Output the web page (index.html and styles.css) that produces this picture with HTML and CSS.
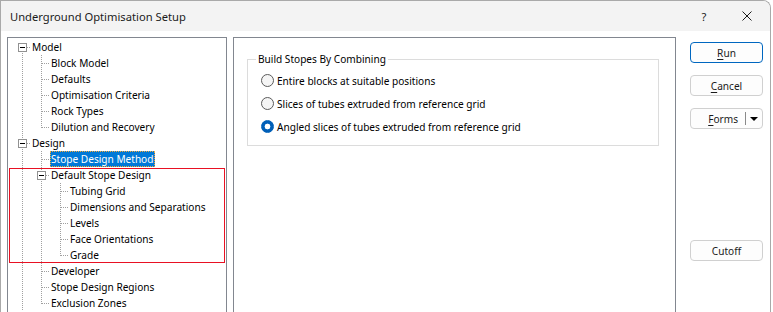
FILE: index.html
```html
<!DOCTYPE html>
<html lang="en">
<head>
    <meta charset="UTF-8">
    <title>Underground Optimisation Setup</title>
    <link rel="stylesheet" href="styles.css">
</head>
<body>
    <div class="window">
        <div class="titlebar">
            <span class="title">Underground Optimisation Setup</span>
            <span class="cap help">?</span>
            <span class="cap close">
                <svg width="10" height="10" viewBox="0 0 10 10"><path d="M0.5 0.5L9.5 9.5M9.5 0.5L0.5 9.5" stroke="#1b1b1b" stroke-width="1" fill="none"/></svg>
            </span>
        </div>
        <div class="body">
            <div class="tree">
                <div class="row"><span class="g first"><span class="box"></span></span><span class="lbl">Model</span></div>
                <div class="row"><span class="g pipe"></span><span class="g tee"></span><span class="lbl">Block Model</span></div>
                <div class="row"><span class="g pipe"></span><span class="g tee"></span><span class="lbl">Defaults</span></div>
                <div class="row"><span class="g pipe"></span><span class="g tee"></span><span class="lbl">Optimisation Criteria</span></div>
                <div class="row"><span class="g pipe"></span><span class="g tee"></span><span class="lbl">Rock Types</span></div>
                <div class="row"><span class="g pipe"></span><span class="g elbow"></span><span class="lbl">Dilution and Recovery</span></div>
                <div class="row"><span class="g tee"><span class="box"></span></span><span class="lbl">Design</span></div>
                <div class="row"><span class="g pipe"></span><span class="g tee"></span><span class="lbl selected">Stope Design Method</span></div>
                <div class="row"><span class="g pipe"></span><span class="g tee"><span class="box"></span></span><span class="lbl">Default Stope Design</span></div>
                <div class="row"><span class="g pipe"></span><span class="g pipe"></span><span class="g tee"></span><span class="lbl">Tubing Grid</span></div>
                <div class="row"><span class="g pipe"></span><span class="g pipe"></span><span class="g tee"></span><span class="lbl">Dimensions and Separations</span></div>
                <div class="row"><span class="g pipe"></span><span class="g pipe"></span><span class="g tee"></span><span class="lbl">Levels</span></div>
                <div class="row"><span class="g pipe"></span><span class="g pipe"></span><span class="g tee"></span><span class="lbl">Face Orientations</span></div>
                <div class="row"><span class="g pipe"></span><span class="g pipe"></span><span class="g elbow"></span><span class="lbl">Grade</span></div>
                <div class="row"><span class="g pipe"></span><span class="g tee"></span><span class="lbl">Developer</span></div>
                <div class="row"><span class="g pipe"></span><span class="g tee"></span><span class="lbl">Stope Design Regions</span></div>
                <div class="row"><span class="g pipe"></span><span class="g elbow"></span><span class="lbl">Exclusion Zones</span></div>
            </div>
            <div class="page">
                <fieldset class="group">
                    <legend>Build Stopes By Combining</legend>
                    <div class="radio"><span class="dot"></span>Entire blocks at suitable positions</div>
                    <div class="radio"><span class="dot"></span>Slices of tubes extruded from reference grid</div>
                    <div class="radio"><span class="dot on"></span>Angled slices of tubes extruded from reference grid</div>
                </fieldset>
            </div>
            <div class="buttons">
                <button class="btn default"><u>R</u>un</button>
                <button class="btn"><u>C</u>ancel</button>
                <button class="btn split"><span class="split-label"><u>F</u>orms</span><span class="split-sep"></span><span class="split-arrow"></span></button>
                <button class="btn cutoff">Cutoff</button>
            </div>
        </div>
        <div class="annotation"></div>
    </div>
</body>
</html>
```

FILE: styles.css
```css
html, body {
    margin: 0;
    padding: 0;
    background: #ffffff;
}
body {
    font-family: "Segoe UI", "Noto Sans", sans-serif;
    font-size: 10.1px;
    color: #000;
}
.window {
    position: relative;
    width: 771px;
    height: 312px;
    box-sizing: border-box;
    border: 1px solid #a9a9a9;
    border-bottom: none;
    border-top-right-radius: 8px;
    overflow: hidden;
    background: #ffffff;
}
.titlebar {
    height: 30px;
    display: flex;
    align-items: center;
    background: #f3f3f3;
    font-size: 11.2px;
}
.title {
    padding-left: 9px;
    color: #1b1b1b;
}
.cap {
    height: 30px;
    display: flex;
    align-items: center;
    justify-content: center;
    color: #1b1b1b;
}
.help {
    margin-left: auto;
    width: 40px;
}
.close {
    width: 46px;
}
.body {
    display: flex;
    align-items: flex-start;
    padding: 6px 0 0 6px;
}

/* tree */
.tree {
    --v: repeating-linear-gradient(to bottom, #a0a0a0 0 1px, transparent 1px 2px);
    --h: repeating-linear-gradient(to right, #a0a0a0 0 1px, transparent 1px 2px);
    flex: none;
    width: 220px;
    height: 300px;
    box-sizing: border-box;
    border: 1px solid #828790;
    padding-top: 1px;
    background: #fff;
}
.row {
    display: flex;
    height: 16px;
    padding-left: 5px;
}
.g {
    flex: none;
    width: 19px;
    height: 16px;
    display: flex;
    align-items: flex-start;
}
.pipe {
    background: var(--v) 9px 0 / 1px 16px no-repeat;
}
.tee {
    background: var(--v) 9px 0 / 1px 16px no-repeat, var(--h) 10px 8px / 7px 1px no-repeat;
}
.elbow {
    background: var(--v) 9px 0 / 1px 9px no-repeat, var(--h) 10px 8px / 7px 1px no-repeat;
}
.first {
    background: var(--v) 9px 8px / 1px 8px no-repeat, var(--h) 10px 8px / 7px 1px no-repeat;
}
.box {
    width: 9px;
    height: 9px;
    box-sizing: border-box;
    margin: 4px 0 0 5px;
    border: 1px solid #919191;
    background: #fff;
    display: flex;
    align-items: center;
    justify-content: center;
}
.box::after {
    content: "";
    width: 5px;
    height: 1px;
    background: #000;
}
.lbl {
    margin-left: -1px;
    padding: 0 2px 0 1px;
    line-height: 16px;
    white-space: nowrap;
}
.lbl.selected {
    background: #0078d7;
    color: #fff;
    outline: 1px dotted #f4a93a;
    outline-offset: -1px;
}

/* page */
.page {
    flex: none;
    width: 443px;
    height: 300px;
    box-sizing: border-box;
    margin-left: 6px;
    border: 1px solid #828790;
    padding: 13px 0 0 13px;
}
.group {
    width: 412px;
    box-sizing: border-box;
    margin: 0;
    padding: 2px 0 7px 13px;
    border: 1px solid #dcdcdc;
}
.group legend {
    margin-left: -5px;
    padding: 0 2px;
    line-height: 16px;
    color: #000;
}
.radio {
    display: flex;
    align-items: center;
    height: 23px;
    white-space: nowrap;
}
.dot {
    flex: none;
    width: 13px;
    height: 13px;
    box-sizing: border-box;
    border: 1px solid #5b5b5b;
    border-radius: 50%;
    background: #f5f5f5;
    margin-right: 3px;
}
.dot.on {
    border-color: #005fb8;
    background: radial-gradient(circle, #fff 0 2.6px, #005fb8 3.2px);
}

/* buttons */
.buttons {
    flex: none;
    width: 73px;
    margin: 5px 0 0 14px;
    display: flex;
    flex-direction: column;
    gap: 12px;
}
.btn {
    height: 21px;
    box-sizing: border-box;
    padding: 0;
    border: 1px solid #d0d0d0;
    border-radius: 4px;
    background: #fdfdfd;
    font: inherit;
    color: #1b1b1b;
    line-height: 18px;
}
.btn u {
    text-underline-offset: 2px;
}
.btn.default {
    border-color: #0067c0;
}
.split {
    display: flex;
    align-items: center;
}
.split-label {
    flex: 1;
    text-align: right;
    padding-right: 7px;
}
.split-sep {
    width: 1px;
    height: 13px;
    background: #8a8a8a;
}
.split-arrow {
    width: 16px;
    height: 4px;
    display: flex;
    justify-content: center;
}
.split-arrow::after {
    content: "";
    border-left: 4px solid transparent;
    border-right: 4px solid transparent;
    border-top: 4px solid #000;
}
.cutoff {
    margin-top: 99px;
}

/* red highlight drawn over the tree */
.annotation {
    position: absolute;
    left: 8px;
    top: 167px;
    width: 216px;
    height: 95px;
    box-sizing: border-box;
    border: 1px solid #e81123;
}
```
